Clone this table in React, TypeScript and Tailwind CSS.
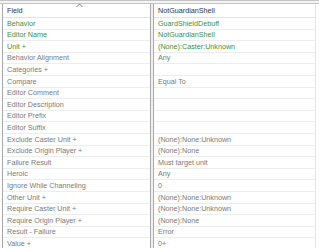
import React from 'react';

type Row = { field: string; value: string; green?: boolean };

const rows: Row[] = [
  { field: 'Behavior', value: 'GuardShieldDebuff', green: true },
  { field: 'Editor Name', value: 'NotGuardianShell', green: true },
  { field: 'Unit +', value: '(None):Caster:Unknown', green: true },
  { field: 'Behavior Alignment', value: 'Any' },
  { field: 'Categories +', value: '' },
  { field: 'Compare', value: 'Equal To' },
  { field: 'Editor Comment', value: '' },
  { field: 'Editor Description', value: '' },
  { field: 'Editor Prefix', value: '' },
  { field: 'Editor Suffix', value: '' },
  { field: 'Exclude Caster Unit +', value: '(None):None:Unknown' },
  { field: 'Exclude Origin Player +', value: '(None):None' },
  { field: 'Failure Result', value: 'Must target unit' },
  { field: 'Heroic', value: 'Any' },
  { field: 'Ignore While Channeling', value: '0' },
  { field: 'Other Unit +', value: '(None):None:Unknown' },
  { field: 'Require Caster Unit +', value: '(None):None:Unknown' },
  { field: 'Require Origin Player +', value: '(None):None' },
  { field: 'Result - Failure', value: 'Error' },
  { field: 'Value +', value: '0+' },
];

export default function App() {
  return (
    <div
      className="relative w-[319px] h-[248px] overflow-hidden bg-white text-[7.2px] leading-none"
      style={{ fontFamily: '"Liberation Sans", Arial, sans-serif' }}
    >
      {/* top splitter edge */}
      <div className="h-[4px] border-t border-b border-[#c4c4c4] bg-[#f3f3f3]" />

      {/* sort caret */}
      <svg className="absolute z-10 left-[76px] top-[3px]" width="7" height="5" viewBox="0 0 7 5">
        <path d="M0.5 4 L3.5 1 L6.5 4" fill="none" stroke="#7e7e7e" strokeWidth="1" />
      </svg>

      <div className="flex h-full">
        {/* field pane */}
        <div className="ml-[2px] w-[149px] h-full border-l border-r border-[#a9a9a9]">
          <div className="h-[14px] flex items-center pl-[4px] border-b border-[#e2e2e2] text-[#333]">
            Field
          </div>
          {rows.map((r) => (
            <div
              key={r.field}
              className={`h-[11.6px] flex items-center pl-[4px] border-b border-[#ededed] ${
                r.green ? 'text-[#3f8f3a]' : 'text-[#7a7a7a]'
              }`}
            >
              {r.field}
            </div>
          ))}
        </div>

        <div className="w-[2px] h-full bg-[#f0f0f0]" />

        {/* value pane */}
        <div className="flex-1 h-full border-l border-[#a9a9a9]">
          <div className="w-[162px] h-full border-r border-[#e6e6e6]">
            <div className="h-[14px] flex items-center pl-[4px] border-b border-[#e2e2e2] text-[#333]">
              NotGuardianShell
            </div>
            {rows.map((r) => (
              <div
                key={r.field}
                className={`h-[11.6px] flex items-center pl-[4px] border-b border-[#ededed] ${
                  r.green ? 'text-[#3f8f3a]' : 'text-[#7a7a7a]'
                }`}
              >
                {r.value}
              </div>
            ))}
          </div>
        </div>
      </div>
    </div>
  );
}
